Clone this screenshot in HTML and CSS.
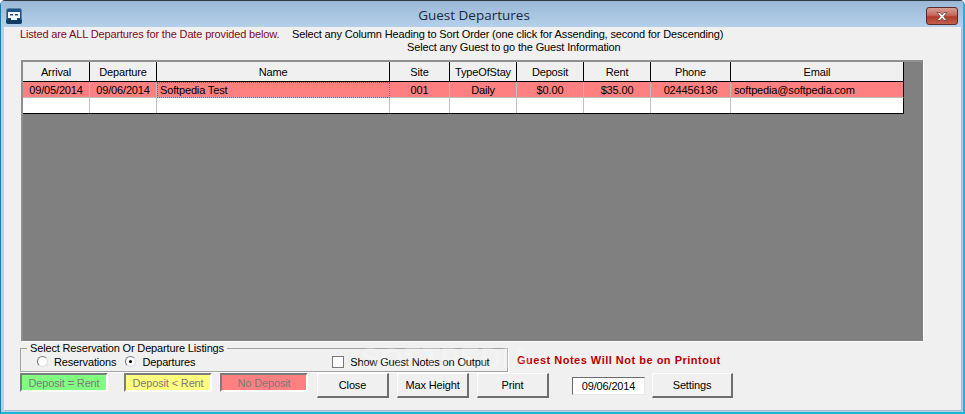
FILE: index.html
```html
<!DOCTYPE html>
<html lang="en">
<head>
<meta charset="utf-8">
<title>Guest Departures</title>
<link rel="stylesheet" href="styles.css">
</head>
<body>
<div class="window">
  <header class="titlebar">
    <svg class="app-icon" width="16" height="16" viewBox="0 0 16 16">
      <rect x="0.5" y="0.5" width="15" height="15" rx="2" fill="#1f5288" stroke="#5d7fa3"/>
      <rect x="0" y="11" width="16" height="5" rx="2" fill="#143a66"/>
      <path d="M2 4h12v6h-3v2H5v-2H2z" fill="#f2f6fa"/>
      <rect x="4" y="6" width="3" height="1.5" fill="#1f5288"/>
      <rect x="9" y="6" width="3" height="1.5" fill="#1f5288"/>
    </svg>
    <h1 class="title">Guest Departures</h1>
    <button class="close-x" aria-label="Close">
      <svg width="16" height="11" viewBox="0 0 16 11"><path d="M3 1.500h3L8 3.800 10 1.500h3L9.800 5.500 13 9.500h-3L8 7.200 6 9.500H3l3.200-4z" fill="#f4f1f1" stroke="#6b3b38" stroke-width="0.8"/></svg>
    </button>
  </header>
  <main class="client">
    <div class="info-one">
      <span class="info-red">Listed are ALL Departures for the Date provided below.</span>
      <span class="info-black">Select any Column Heading to Sort Order (one click for Assending, second for Descending)</span>
    </div>
    <div class="info-two">Select any Guest to go the Guest Information</div>
    <div class="grid-panel">
      <div class="grid">
        <div class="hd">Arrival</div>
        <div class="hd">Departure</div>
        <div class="hd">Name</div>
        <div class="hd">Site</div>
        <div class="hd">TypeOfStay</div>
        <div class="hd">Deposit</div>
        <div class="hd">Rent</div>
        <div class="hd">Phone</div>
        <div class="hd">Email</div>
        <div class="cell">09/05/2014</div>
        <div class="cell">09/06/2014</div>
        <div class="cell left focus">Softpedia Test</div>
        <div class="cell">001</div>
        <div class="cell">Daily</div>
        <div class="cell">$0.00</div>
        <div class="cell">$35.00</div>
        <div class="cell">024456136</div>
        <div class="cell left cell-last">softpedia@softpedia.com</div>
        <div class="blank"></div><div class="blank"></div><div class="blank"></div>
        <div class="blank"></div><div class="blank"></div><div class="blank"></div>
        <div class="blank"></div><div class="blank"></div><div class="blank blank-last"></div>
      </div>
    </div>
    <div class="options-row">
      <fieldset class="group">
        <legend class="group-label">Select Reservation Or Departure Listings</legend>
        <label class="opt opt-res"><span class="radio"></span>Reservations</label>
        <label class="opt opt-dep"><span class="radio on"></span>Departures</label>
        <label class="opt opt-notes"><span class="check"></span>Show Guest Notes on Output</label>
      </fieldset>
      <div class="notes-warning">Guest Notes Will Not be on Printout</div>
    </div>
    <div class="actions-row">
      <div class="swatch green">Deposit = Rent</div>
      <div class="swatch yellow">Deposit &lt; Rent</div>
      <div class="swatch red">No Deposit</div>
      <button class="btn btn-close">Close</button>
      <button class="btn btn-max">Max Height</button>
      <button class="btn btn-print">Print</button>
      <div class="date">09/06/2014</div>
      <button class="btn btn-settings">Settings</button>
    </div>
    <div class="watermark">SOFTPEDIA</div>
  </main>
</div>
</body>
</html>
```
FILE: styles.css
```css
* { box-sizing: border-box; }
html, body { margin: 0; padding: 0; }
body { width: 965px; height: 414px; overflow: hidden; background: #fff; font-family: "Liberation Sans", Arial, sans-serif; font-size: 11px; letter-spacing: -0.15px; color: #000; }
.window { width: 965px; height: 414px; display: flex; flex-direction: column; background: #b7d0e8; border: 1px solid #2c3a46; border-right: 2px solid #19b6dc; border-bottom: 2px solid #19b6dc; border-left: 1px solid #1b7fae; border-radius: 5px 5px 0 0; padding: 0 2px 2px 3px; }
.titlebar { height: 26px; flex: none; display: flex; align-items: center; margin: 0 -2px 0 -3px; padding: 0 5px; background: linear-gradient(#9ab8d6, #b5d0ea); }
.app-icon { flex: none; margin-top: 3px; }
.title { flex: 1; margin: 0; text-align: center; font-family: "Open Sans", sans-serif; font-size: 13.500px; letter-spacing: 0; font-weight: 400; color: #1c2a38; padding-top: 2px; }
.close-x { flex: none; align-self: flex-start; width: 32px; height: 18px; padding: 0; margin: 6px 0 0 0; display: flex; align-items: center; justify-content: center; border: 1px solid #5a2a2c; border-radius: 3px; background: linear-gradient(#d99f94 0, #c8675a 45%, #b23a28 55%, #c4604d 100%); }
.client { flex: 1; background: #f0f0f0; position: relative; box-shadow: 1px 1px 0 #a9b8c8; display: flex; flex-direction: column; padding-left: 16px; min-height: 0; }
.info-one { height: 13px; line-height: 13px; margin-top: 1px; white-space: nowrap; display: flex; }
.info-red { color: #7d0a16; width: 272px; flex: none; }
.info-black { color: #000; }
.info-two { height: 13px; line-height: 13px; padding-left: 387px; white-space: nowrap; }
.grid-panel { width: 902px; height: 281px; margin: 6px 0 0 1px; background: #808080; border-top: 2px solid #8f8f8f; border-left: 2px solid #8f8f8f; box-shadow: 1px 1px 0 #fff; flex: none; }
.grid { width: 881px; display: grid; grid-template-columns: 67px 67px 233px 60px 67px 67px 67px 80px 173px; grid-template-rows: 20px 16px 15px; border-bottom: 1px solid #000; }
.hd { display: flex; align-items: center; justify-content: center; background: #f0f0f0; border-right: 1px solid #000; border-bottom: 1px solid #000; }
.cell { display: flex; align-items: center; justify-content: center; background: #ff8080; border-right: 1px solid #c0c0c0; border-bottom: 1px solid #c0c0c0; white-space: nowrap; }
.cell.left { justify-content: flex-start; padding-left: 3px; }
.cell.focus { outline: 1px dotted #0a8f96; outline-offset: -1px; }
.cell-last { border-right: 1px solid #000; }
.blank { background: #fff; border-right: 1px solid #c0c0c0; }
.blank-last { border-right: 1px solid #000; }
.options-row { display: flex; height: 30px; margin-top: 1px; flex: none; }
.group { width: 488px; height: 30px; margin: 0; padding: 0; border: 1px solid #a3a3a3; box-shadow: 1px 1px 0 #fff; display: flex; align-items: center; min-width: 0; }
.group-label { padding: 0 3px; margin-left: 6px; height: 12px; line-height: 12px; white-space: nowrap; }
.opt { display: flex; align-items: center; white-space: nowrap; margin-top: -2px; height: 13px; }
.opt-res { margin-left: 16px; }
.opt-dep { margin-left: 9px; }
.opt-notes { margin-left: 137px; }
.radio { width: 11px; height: 11px; border-radius: 50%; border: 1px solid #777; border-right-color: #ddd; border-bottom-color: #ddd; background: #fff; margin-right: 6px; position: relative; display: block; }
.radio.on::after { content: ""; position: absolute; left: 3px; top: 3px; width: 3px; height: 3px; border-radius: 50%; background: #000; }
.check { width: 12px; height: 12px; border: 1px solid #777; background: #fff; margin-right: 6px; display: block; }
.notes-warning { margin-left: 9px; padding-top: 12px; font-weight: 700; color: #b80000; white-space: nowrap; letter-spacing: 0.5px; line-height: 13px; }
.actions-row { display: flex; align-items: flex-start; height: 26px; margin-top: 1px; flex: none; }
.swatch { width: 88px; height: 19px; display: flex; align-items: center; justify-content: center; color: #7a7a7a; border: 2px solid #7d7d7d; border-right-color: #fff; border-bottom-color: #fff; }
.green { background: #80ff80; }
.yellow { background: #ffff80; margin-left: 16px; }
.red { background: #ff8080; margin-left: 8px; }
.btn { height: 25px; padding: 0; font: inherit; letter-spacing: inherit; color: #000; background: #f0f0f0; border: 1px solid #fff; border-right: 2px solid #6e6e6e; border-bottom: 2px solid #6e6e6e; }
.btn-close { width: 72px; margin-left: 9px; }
.btn-max { width: 72px; margin-left: 8px; }
.btn-print { width: 72px; margin-left: 8px; }
.btn-settings { width: 81px; margin-left: 7px; }
.date { width: 73px; height: 18px; margin: 4px 0 0 23px; display: flex; align-items: center; justify-content: center; background: #fff; border: 1px solid #6a6a6a; border-right-color: #e8e8e8; border-bottom-color: #e8e8e8; }
.watermark { position: absolute; left: 356px; top: 316px; font-size: 30px; line-height: 30px; font-weight: 700; color: rgba(255,255,255,0.25); letter-spacing: 0; pointer-events: none; white-space: nowrap; }
```
